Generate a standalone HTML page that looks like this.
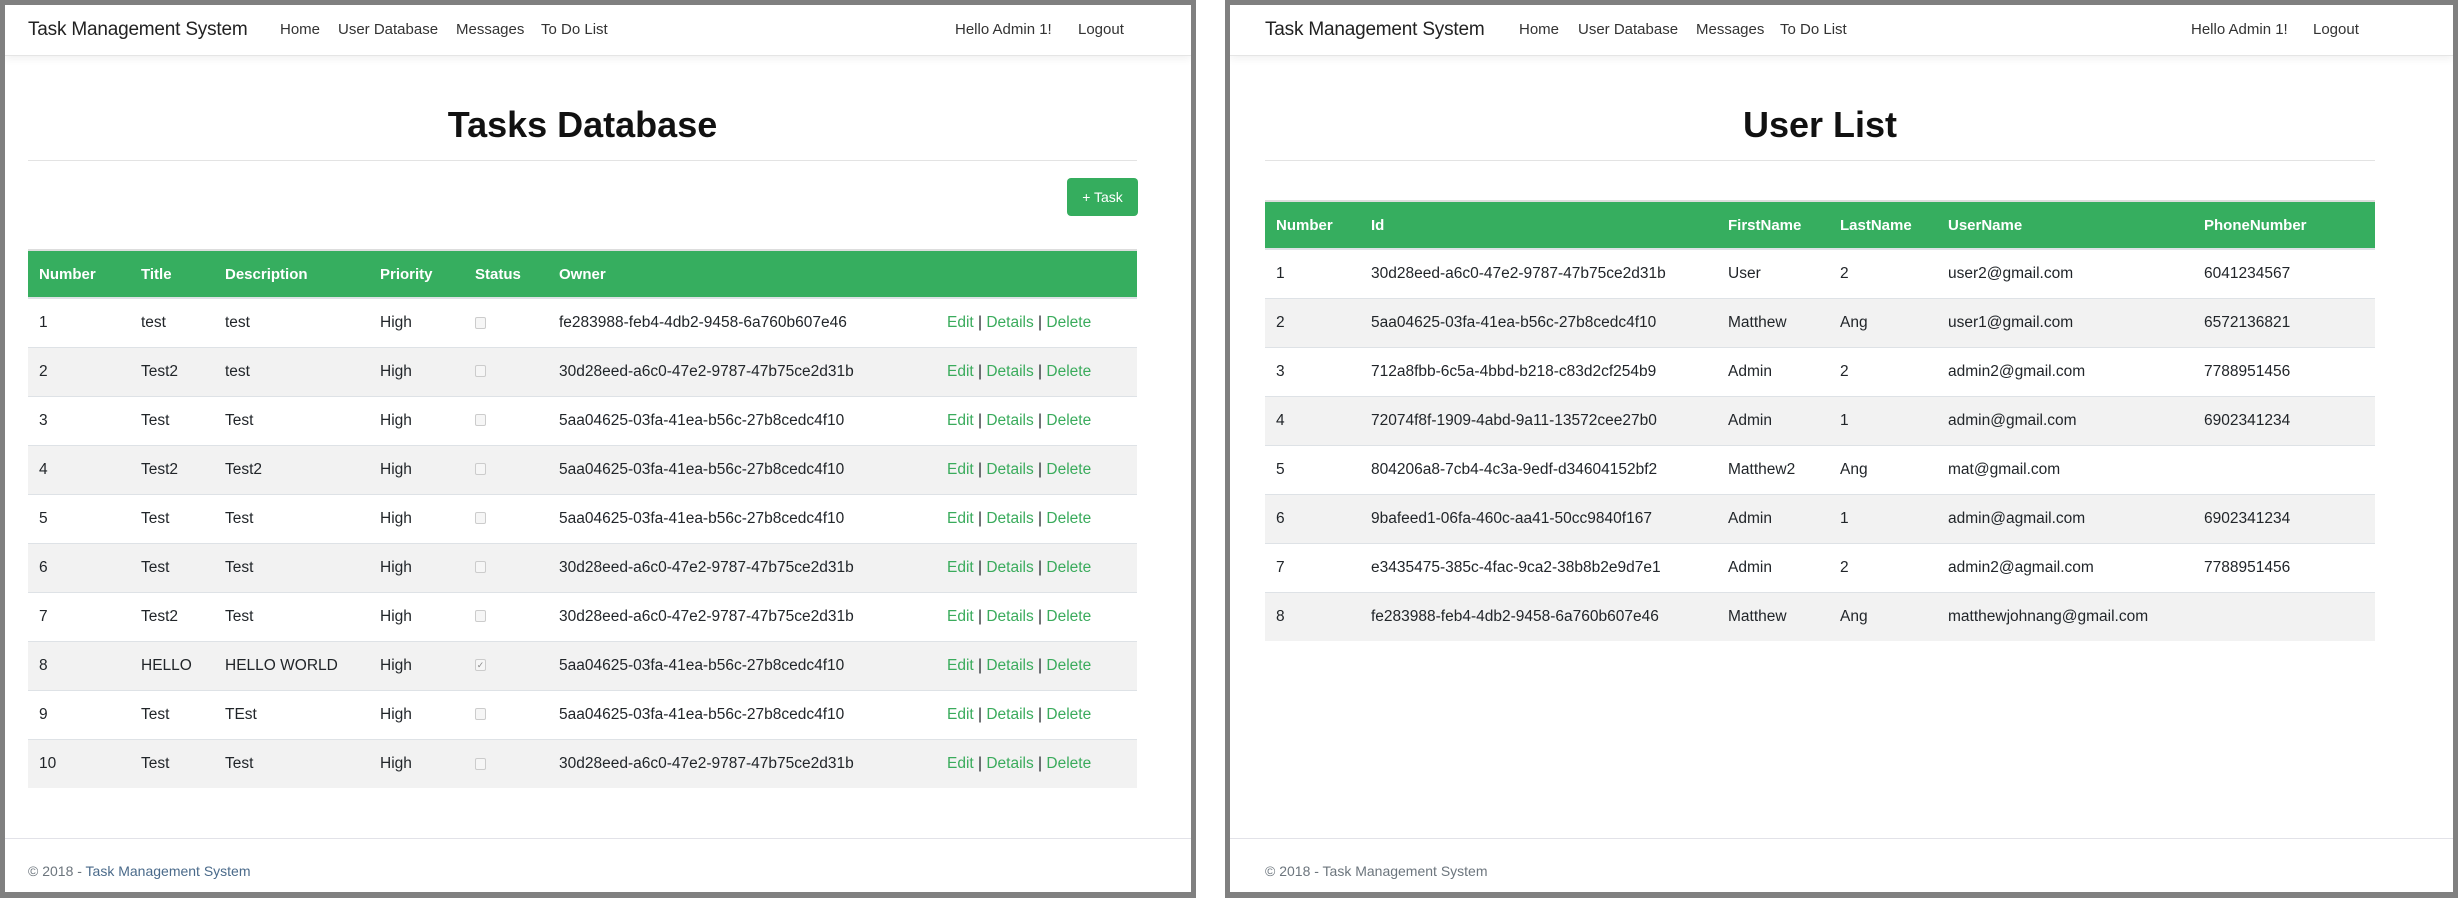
<!DOCTYPE html>
<html><head><meta charset="utf-8"><style>
*{box-sizing:border-box;margin:0;padding:0}
body{width:2458px;height:898px;background:#fff;font-family:"Liberation Sans",sans-serif;color:#212529;position:relative;overflow:hidden}
.panel{position:absolute;top:0;height:898px;border:5px solid #808080;border-top-width:5px;border-bottom-width:6px;background:#fff;overflow:hidden}
.nav{position:absolute;left:0;right:0;top:0;height:51px;border-bottom:1px solid #e5e5e5;box-shadow:0 3px 8px rgba(0,0,0,.06)}
.nav span{position:absolute;top:16px;font-size:15px;color:#333;white-space:nowrap}
.nav .brand{font-size:19px;top:14px;color:#222;letter-spacing:-0.2px}
h1{position:absolute;font-size:36px;font-weight:bold;top:99px;text-align:center;color:#111}
.hr{position:absolute;top:155px;height:1px;background:#e3e3e3}
.btn{position:absolute;left:1062px;top:173px;width:71px;height:38px;background:#35ad5e;border-radius:4px;color:#fff;font-size:14px;line-height:38px;text-align:center}
table{position:absolute;border-collapse:collapse;table-layout:fixed;font-size:15.5px}
th{background:#36ae5f;color:#fff;text-align:left;height:48px;padding-left:11px;font-weight:bold;border-top:2px solid #ddd;border-bottom:2px solid #dee2e6;font-size:15px}
td{height:49px;padding-left:11px;border-top:1px solid #dee2e6;white-space:nowrap}
tr:nth-child(odd) td{background:#f2f2f2}
td a{color:#3aab5c}
.cb{display:inline-block;width:11px;height:12px;border:1px solid #ccc;border-radius:2px;background:#f6f6f6;vertical-align:middle;font-size:9px;line-height:10px;color:#888;text-align:center}
.foot-l{position:absolute;top:833px;left:0;right:0;height:1px;background:#e2e2e8}
.foot{position:absolute;top:858px;font-size:14px;color:#6c757d}
</style></head><body>
<div class="panel" style="left:0;width:1196px">
 <div class="nav">
  <span class="brand" style="left:23px">Task Management System</span>
  <span style="left:275px">Home</span><span style="left:333px">User Database</span><span style="left:451px">Messages</span><span style="left:536px">To Do List</span>
  <span style="left:950px">Hello Admin 1!</span><span style="left:1073px">Logout</span>
 </div>
 <h1 style="left:23px;width:1109px">Tasks Database</h1>
 <div class="hr" style="left:23px;width:1109px"></div>
 <div class="btn">+ Task</div>
 <table style="left:23px;top:244px;width:1109px">
  <colgroup><col style="width:102px"><col style="width:84px"><col style="width:155px"><col style="width:95px"><col style="width:84px"><col style="width:388px"><col style="width:201px"></colgroup>
  <tr><th>Number</th><th>Title</th><th>Description</th><th>Priority</th><th>Status</th><th>Owner</th><th></th></tr>
  <tr><td>1</td><td>test</td><td>test</td><td>High</td><td><span class="cb"></span></td><td>fe283988-feb4-4db2-9458-6a760b607e46</td><td><a>Edit</a> | <a>Details</a> | <a>Delete</a></td></tr>
  <tr><td>2</td><td>Test2</td><td>test</td><td>High</td><td><span class="cb"></span></td><td>30d28eed-a6c0-47e2-9787-47b75ce2d31b</td><td><a>Edit</a> | <a>Details</a> | <a>Delete</a></td></tr>
  <tr><td>3</td><td>Test</td><td>Test</td><td>High</td><td><span class="cb"></span></td><td>5aa04625-03fa-41ea-b56c-27b8cedc4f10</td><td><a>Edit</a> | <a>Details</a> | <a>Delete</a></td></tr>
  <tr><td>4</td><td>Test2</td><td>Test2</td><td>High</td><td><span class="cb"></span></td><td>5aa04625-03fa-41ea-b56c-27b8cedc4f10</td><td><a>Edit</a> | <a>Details</a> | <a>Delete</a></td></tr>
  <tr><td>5</td><td>Test</td><td>Test</td><td>High</td><td><span class="cb"></span></td><td>5aa04625-03fa-41ea-b56c-27b8cedc4f10</td><td><a>Edit</a> | <a>Details</a> | <a>Delete</a></td></tr>
  <tr><td>6</td><td>Test</td><td>Test</td><td>High</td><td><span class="cb"></span></td><td>30d28eed-a6c0-47e2-9787-47b75ce2d31b</td><td><a>Edit</a> | <a>Details</a> | <a>Delete</a></td></tr>
  <tr><td>7</td><td>Test2</td><td>Test</td><td>High</td><td><span class="cb"></span></td><td>30d28eed-a6c0-47e2-9787-47b75ce2d31b</td><td><a>Edit</a> | <a>Details</a> | <a>Delete</a></td></tr>
  <tr><td>8</td><td>HELLO</td><td>HELLO WORLD</td><td>High</td><td><span class="cb">✓</span></td><td>5aa04625-03fa-41ea-b56c-27b8cedc4f10</td><td><a>Edit</a> | <a>Details</a> | <a>Delete</a></td></tr>
  <tr><td>9</td><td>Test</td><td>TEst</td><td>High</td><td><span class="cb"></span></td><td>5aa04625-03fa-41ea-b56c-27b8cedc4f10</td><td><a>Edit</a> | <a>Details</a> | <a>Delete</a></td></tr>
  <tr><td>10</td><td>Test</td><td>Test</td><td>High</td><td><span class="cb"></span></td><td>30d28eed-a6c0-47e2-9787-47b75ce2d31b</td><td><a>Edit</a> | <a>Details</a> | <a>Delete</a></td></tr>
 </table>
 <div class="foot-l"></div>
 <div class="foot" style="left:23px">© 2018 - <span style="color:#4a6a8a">Task Management System</span></div>
</div>

<div class="panel" style="left:1225px;width:1233px">
 <div class="nav">
  <span class="brand" style="left:35px">Task Management System</span>
  <span style="left:289px">Home</span><span style="left:348px">User Database</span><span style="left:466px">Messages</span><span style="left:550px">To Do List</span>
  <span style="left:961px">Hello Admin 1!</span><span style="left:1083px">Logout</span>
 </div>
 <h1 style="left:35px;width:1110px">User List</h1>
 <div class="hr" style="left:35px;width:1110px"></div>
 <table style="left:35px;top:195px;width:1110px">
  <colgroup><col style="width:95px"><col style="width:357px"><col style="width:112px"><col style="width:108px"><col style="width:256px"><col style="width:182px"></colgroup>
  <tr><th>Number</th><th>Id</th><th>FirstName</th><th>LastName</th><th>UserName</th><th>PhoneNumber</th></tr>
  <tr><td>1</td><td>30d28eed-a6c0-47e2-9787-47b75ce2d31b</td><td>User</td><td>2</td><td>user2@gmail.com</td><td>6041234567</td></tr>
  <tr><td>2</td><td>5aa04625-03fa-41ea-b56c-27b8cedc4f10</td><td>Matthew</td><td>Ang</td><td>user1@gmail.com</td><td>6572136821</td></tr>
  <tr><td>3</td><td>712a8fbb-6c5a-4bbd-b218-c83d2cf254b9</td><td>Admin</td><td>2</td><td>admin2@gmail.com</td><td>7788951456</td></tr>
  <tr><td>4</td><td>72074f8f-1909-4abd-9a11-13572cee27b0</td><td>Admin</td><td>1</td><td>admin@gmail.com</td><td>6902341234</td></tr>
  <tr><td>5</td><td>804206a8-7cb4-4c3a-9edf-d34604152bf2</td><td>Matthew2</td><td>Ang</td><td>mat@gmail.com</td><td></td></tr>
  <tr><td>6</td><td>9bafeed1-06fa-460c-aa41-50cc9840f167</td><td>Admin</td><td>1</td><td>admin@agmail.com</td><td>6902341234</td></tr>
  <tr><td>7</td><td>e3435475-385c-4fac-9ca2-38b8b2e9d7e1</td><td>Admin</td><td>2</td><td>admin2@agmail.com</td><td>7788951456</td></tr>
  <tr><td>8</td><td>fe283988-feb4-4db2-9458-6a760b607e46</td><td>Matthew</td><td>Ang</td><td>matthewjohnang@gmail.com</td><td></td></tr>
 </table>
 <div class="foot-l"></div>
 <div class="foot" style="left:35px">© 2018 - Task Management System</div>
</div>
</body></html>
